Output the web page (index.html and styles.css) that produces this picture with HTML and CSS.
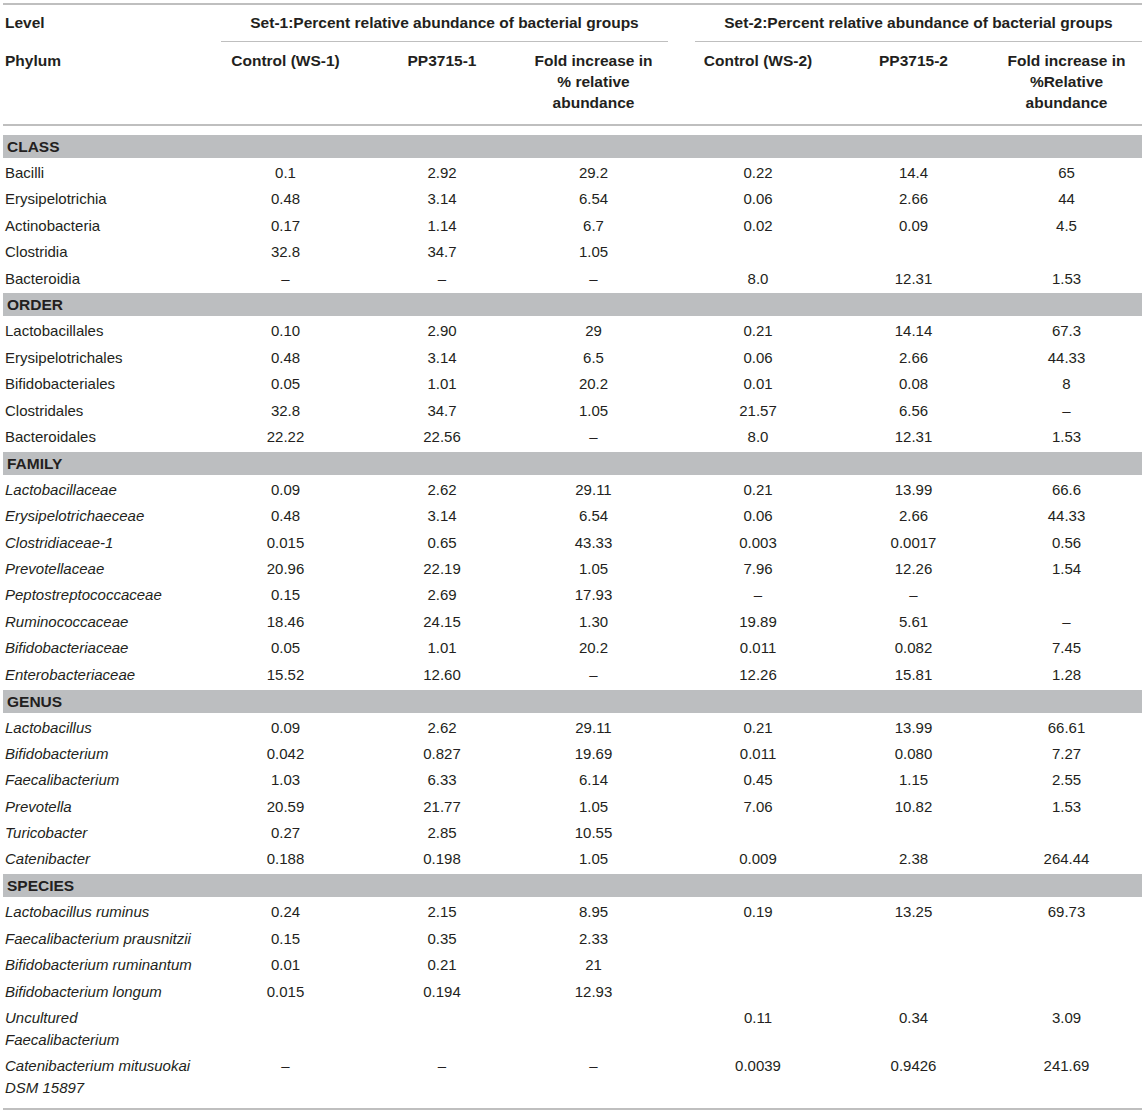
FILE: index.html
```html
<!DOCTYPE html>
<html>
<head>
<meta charset="utf-8">
<link rel="stylesheet" href="styles.css">
</head>
<body>
<table class="tbl">
<colgroup>
<col class="c1"><col class="c2"><col class="c3"><col class="c4"><col class="c5"><col class="c6"><col class="c7">
</colgroup>
<thead>
<tr class="h1">
<th class="lvl">Level</th>
<th colspan="3" class="grp"><div class="grp-in g1">Set-1:Percent relative abundance of bacterial groups</div></th>
<th colspan="3" class="grp"><div class="grp-in g2">Set-2:Percent relative abundance of bacterial groups</div></th>
</tr>
<tr class="h2">
<th class="lvl">Phylum</th>
<th>Control (WS-1)</th>
<th>PP3715-1</th>
<th class="p4">Fold increase in<br>% relative<br>abundance</th>
<th class="p5">Control (WS-2)</th>
<th>PP3715-2</th>
<th>Fold increase in<br>%Relative<br>abundance</th>
</tr>
</thead>
<tbody>
<tr class="band first"><td colspan="7"><span>CLASS</span></td></tr>
<tr><td>Bacilli</td><td>0.1</td><td>2.92</td><td class="p4">29.2</td><td class="p5">0.22</td><td>14.4</td><td>65</td></tr>
<tr><td>Erysipelotrichia</td><td>0.48</td><td>3.14</td><td class="p4">6.54</td><td class="p5">0.06</td><td>2.66</td><td>44</td></tr>
<tr><td>Actinobacteria</td><td>0.17</td><td>1.14</td><td class="p4">6.7</td><td class="p5">0.02</td><td>0.09</td><td>4.5</td></tr>
<tr><td>Clostridia</td><td>32.8</td><td>34.7</td><td class="p4">1.05</td><td class="p5"></td><td></td><td></td></tr>
<tr><td>Bacteroidia</td><td>–</td><td>–</td><td class="p4">–</td><td class="p5">8.0</td><td>12.31</td><td>1.53</td></tr>
<tr class="band"><td colspan="7"><span>ORDER</span></td></tr>
<tr><td>Lactobacillales</td><td>0.10</td><td>2.90</td><td class="p4">29</td><td class="p5">0.21</td><td>14.14</td><td>67.3</td></tr>
<tr><td>Erysipelotrichales</td><td>0.48</td><td>3.14</td><td class="p4">6.5</td><td class="p5">0.06</td><td>2.66</td><td>44.33</td></tr>
<tr><td>Bifidobacteriales</td><td>0.05</td><td>1.01</td><td class="p4">20.2</td><td class="p5">0.01</td><td>0.08</td><td>8</td></tr>
<tr><td>Clostridales</td><td>32.8</td><td>34.7</td><td class="p4">1.05</td><td class="p5">21.57</td><td>6.56</td><td>–</td></tr>
<tr><td>Bacteroidales</td><td>22.22</td><td>22.56</td><td class="p4">–</td><td class="p5">8.0</td><td>12.31</td><td>1.53</td></tr>
<tr class="band"><td colspan="7"><span>FAMILY</span></td></tr>
<tr><td><i>Lactobacillaceae</i></td><td>0.09</td><td>2.62</td><td class="p4">29.11</td><td class="p5">0.21</td><td>13.99</td><td>66.6</td></tr>
<tr><td><i>Erysipelotrichaeceae</i></td><td>0.48</td><td>3.14</td><td class="p4">6.54</td><td class="p5">0.06</td><td>2.66</td><td>44.33</td></tr>
<tr><td><i>Clostridiaceae-1</i></td><td>0.015</td><td>0.65</td><td class="p4">43.33</td><td class="p5">0.003</td><td>0.0017</td><td>0.56</td></tr>
<tr><td><i>Prevotellaceae</i></td><td>20.96</td><td>22.19</td><td class="p4">1.05</td><td class="p5">7.96</td><td>12.26</td><td>1.54</td></tr>
<tr><td><i>Peptostreptococcaceae</i></td><td>0.15</td><td>2.69</td><td class="p4">17.93</td><td class="p5">–</td><td>–</td><td></td></tr>
<tr><td><i>Ruminococcaceae</i></td><td>18.46</td><td>24.15</td><td class="p4">1.30</td><td class="p5">19.89</td><td>5.61</td><td>–</td></tr>
<tr><td><i>Bifidobacteriaceae</i></td><td>0.05</td><td>1.01</td><td class="p4">20.2</td><td class="p5">0.011</td><td>0.082</td><td>7.45</td></tr>
<tr><td><i>Enterobacteriaceae</i></td><td>15.52</td><td>12.60</td><td class="p4">–</td><td class="p5">12.26</td><td>15.81</td><td>1.28</td></tr>
<tr class="band"><td colspan="7"><span>GENUS</span></td></tr>
<tr><td><i>Lactobacillus</i></td><td>0.09</td><td>2.62</td><td class="p4">29.11</td><td class="p5">0.21</td><td>13.99</td><td>66.61</td></tr>
<tr><td><i>Bifidobacterium</i></td><td>0.042</td><td>0.827</td><td class="p4">19.69</td><td class="p5">0.011</td><td>0.080</td><td>7.27</td></tr>
<tr><td><i>Faecalibacterium</i></td><td>1.03</td><td>6.33</td><td class="p4">6.14</td><td class="p5">0.45</td><td>1.15</td><td>2.55</td></tr>
<tr><td><i>Prevotella</i></td><td>20.59</td><td>21.77</td><td class="p4">1.05</td><td class="p5">7.06</td><td>10.82</td><td>1.53</td></tr>
<tr><td><i>Turicobacter</i></td><td>0.27</td><td>2.85</td><td class="p4">10.55</td><td class="p5"></td><td></td><td></td></tr>
<tr><td><i>Catenibacter</i></td><td>0.188</td><td>0.198</td><td class="p4">1.05</td><td class="p5">0.009</td><td>2.38</td><td>264.44</td></tr>
<tr class="band"><td colspan="7"><span>SPECIES</span></td></tr>
<tr><td><i>Lactobacillus ruminus</i></td><td>0.24</td><td>2.15</td><td class="p4">8.95</td><td class="p5">0.19</td><td>13.25</td><td>69.73</td></tr>
<tr><td><i>Faecalibacterium prausnitzii</i></td><td>0.15</td><td>0.35</td><td class="p4">2.33</td><td class="p5"></td><td></td><td></td></tr>
<tr><td><i>Bifidobacterium ruminantum</i></td><td>0.01</td><td>0.21</td><td class="p4">21</td><td class="p5"></td><td></td><td></td></tr>
<tr><td><i>Bifidobacterium longum</i></td><td>0.015</td><td>0.194</td><td class="p4">12.93</td><td class="p5"></td><td></td><td></td></tr>
<tr><td><i>Uncultured<br>Faecalibacterium</i></td><td></td><td></td><td class="p4"></td><td class="p5">0.11</td><td>0.34</td><td>3.09</td></tr>
<tr class="last"><td><i>Catenibacterium mitusuokai<br>DSM 15897</i></td><td>–</td><td>–</td><td class="p4">–</td><td class="p5">0.0039</td><td>0.9426</td><td>241.69</td></tr>
</tbody>
</table>
</body>
</html>
```
FILE: styles.css
```css
html, body {
  margin: 0;
  padding: 0;
  background: #ffffff;
}
body {
  padding: 3px 0 0 3px;
  font-family: "Liberation Sans", Arial, Helvetica, sans-serif;
  font-size: 15px;
  color: #231f20;
}
.tbl {
  width: 1139px;
  table-layout: fixed;
  border-collapse: separate;
  border-spacing: 0;
  border-top: 2px solid #bfbfbf;
  border-bottom: 2px solid #bfbfbf;
}
.c1 { width: 203px; }
.c2 { width: 159px; }
.c3 { width: 154px; }
.c4 { width: 157px; }
.c5 { width: 160px; }
.c6 { width: 155px; }
.c7 { width: 151px; }

th {
  font-weight: bold;
  font-size: 15.5px;
  text-align: center;
  vertical-align: top;
  padding: 0;
}
th.lvl { text-align: left; padding-left: 2px; }

.h1 th { padding-top: 7px; line-height: 22px; }
.grp-in {
  border-bottom: 1.5px solid #bfbfbf;
  padding-bottom: 7px;
}
.g1 { margin-left: 15px; margin-right: 8px; }
.g2 { margin-left: 19px; }

.h2 th {
  line-height: 21px;
  padding-top: 8px;
  padding-bottom: 11px;
  border-bottom: 2px solid #bfbfbf;
}

td {
  padding: 2px 0 2.4px;
  line-height: 22px;
  text-align: center;
  vertical-align: top;
  white-space: nowrap;
}
td:first-child { text-align: left; padding-left: 2px; }
.p4 { padding-right: 8px; }
.p5 { padding-left: 4px; }

.band td {
  padding: 1.5px 0 2px;
  text-align: left;
}
.band span {
  display: block;
  background: #bcbec0;
  line-height: 23px;
  font-weight: bold;
  font-size: 15.5px;
  padding-left: 4px;
}
.band.first td { padding-top: 9px; }
.last td { padding-bottom: 9px; }
```
